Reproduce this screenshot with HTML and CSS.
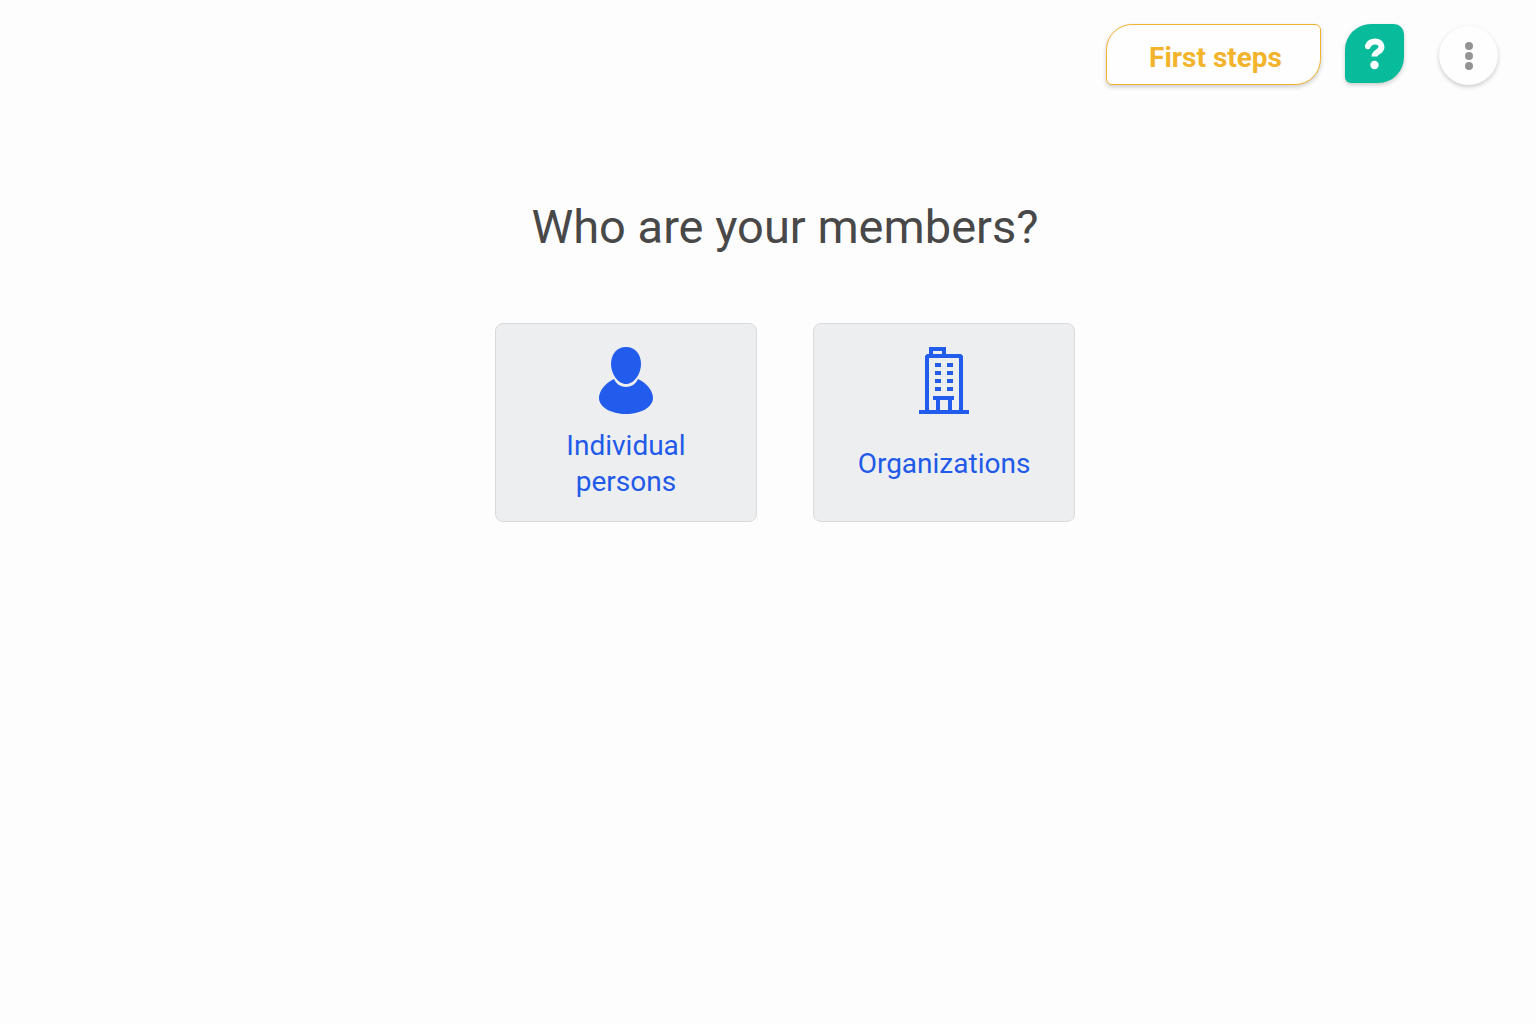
FILE: index.html
```
<!DOCTYPE html>
<html lang="en">

<head>
	<meta charset="utf-8">
	<meta name="viewport" content="width=device-width, initial-scale=1">
	<title>Who are your members?</title>
	<link rel="stylesheet" href="styles.css">
</head>

<body>
	<header class="toolbar">
		<button type="button" class="first-steps">First steps</button>
		<button type="button" class="help" aria-label="Help">
			<svg width="20" height="32" viewBox="0 0 20 32" aria-hidden="true">
				<path d="M3 8.200C4 5 6.500 3.500 10 3.500c4 0 6.500 2.200 6.500 5.300 0 2.800-1.700 4-3.800 5.200-2.200 1.300-3.200 2.200-3.200 4.500" fill="none" stroke="#fff" stroke-width="6" stroke-linejoin="round" />
				<circle cx="2.800" cy="8.500" r="2.800" fill="#fff" />
				<circle cx="9.500" cy="27" r="4.200" fill="#fff" />
			</svg>
		</button>
		<button type="button" class="menu" aria-label="Menu">
			<svg width="8" height="30" viewBox="0 0 8 30" aria-hidden="true">
				<circle cx="4" cy="5" r="4" />
				<circle cx="4" cy="15" r="4" />
				<circle cx="4" cy="25" r="4" />
			</svg>
		</button>
	</header>

	<main class="content">
		<h1 class="title">Who are your members?</h1>
		<div class="choices">
			<button type="button" class="card">
				<svg width="56" height="67" viewBox="0 0 56 67" aria-hidden="true">
					<path d="M28 0c9 0 15 7 15 17C43 27 36 37 28 37S13 27 13 17C13 7 19 0 28 0z" />
					<path d="M16 32C18 37 23 40 28 40s10-3 12-8C49 36 55 44 55 51 55 60 43 67 28 67S1 60 1 51c0-7 6-15 15-19z" />
				</svg>
				<span class="label">Individual persons</span>
			</button>
			<button type="button" class="card">
				<svg width="50" height="67" viewBox="0 0 50 67" aria-hidden="true">
					<path d="M10 7V0H27v7h-4V4h-9v3z" />
					<path d="M6 63V9L8 7h34L44 9V63h-4V11H10v52z" />
					<path d="M16 16h6v4h-6zM28 16h6v4h-6zM16 24h6v4h-6zM28 24h6v4h-6zM16 32h6v4h-6zM28 32h6v4h-6zM16 40h6v4h-6zM28 40h6v4h-6z" />
					<path d="M14 49h21v4H33v10h-4V53h-8v10h-4V53h-3z" />
					<path d="M0 63h50v4H0z" />
				</svg>
				<span class="label">Organizations</span>
			</button>
		</div>
	</main>
</body>

</html>
```

FILE: styles.css
```
* {
	box-sizing: border-box;
}

body {
	margin: 0;
	background: #fdfdfd;
	font-family: Roboto, "Liberation Sans", sans-serif;
	color: #484848;
}

button {
	margin: 0;
	padding: 0;
	border: none;
	font-family: inherit;
	cursor: pointer;
}

/* top right buttons */
.toolbar {
	display: flex;
	justify-content: flex-end;
	align-items: flex-start;
	padding: 24px 38px 0;
}

.first-steps {
	height: 61px;
	padding: 6px 38px 0 42px;
	border: 1px solid #f2b430;
	border-radius: 26px 6px;
	background: #fefefe;
	box-shadow: 0 2px 4px rgba(0, 0, 0, 0.2);
	color: #f2b42c;
	font-size: 28px;
	font-weight: 700;
}

.help,
.menu {
	display: flex;
	justify-content: center;
	align-items: center;
	width: 59px;
	height: 59px;
	box-shadow: 0 2px 4px rgba(0, 0, 0, 0.2);
}

.help {
	margin-left: 24px;
	border-radius: 26px 10px 26px 6px;
	background: #08bb9b;
}

.menu {
	margin: 2px 0 0 35px;
	border-radius: 50%;
	background: #fefefe;
	fill: #949494;
}

/* question and the two answers */
.content {
	padding: 112px 0 40px 34px;
}

.title {
	margin: 0;
	font-size: 47px;
	font-weight: 400;
	line-height: 60px;
	text-align: center;
}

.choices {
	display: flex;
	flex-wrap: wrap;
	justify-content: center;
	gap: 56px;
	margin-top: 66px;
}

.card {
	display: flex;
	flex-direction: column;
	align-items: center;
	gap: 14px;
	width: 262px;
	padding: 23px 48px 21px;
	border: 1px solid #d9dadc;
	border-radius: 8px;
	background: #edeef0;
	color: #1f5ae8;
	fill: #215cec;
	font-size: 28px;
	line-height: 36px;
}

.label {
	display: flex;
	align-items: center;
	min-height: 72px;
}
```
